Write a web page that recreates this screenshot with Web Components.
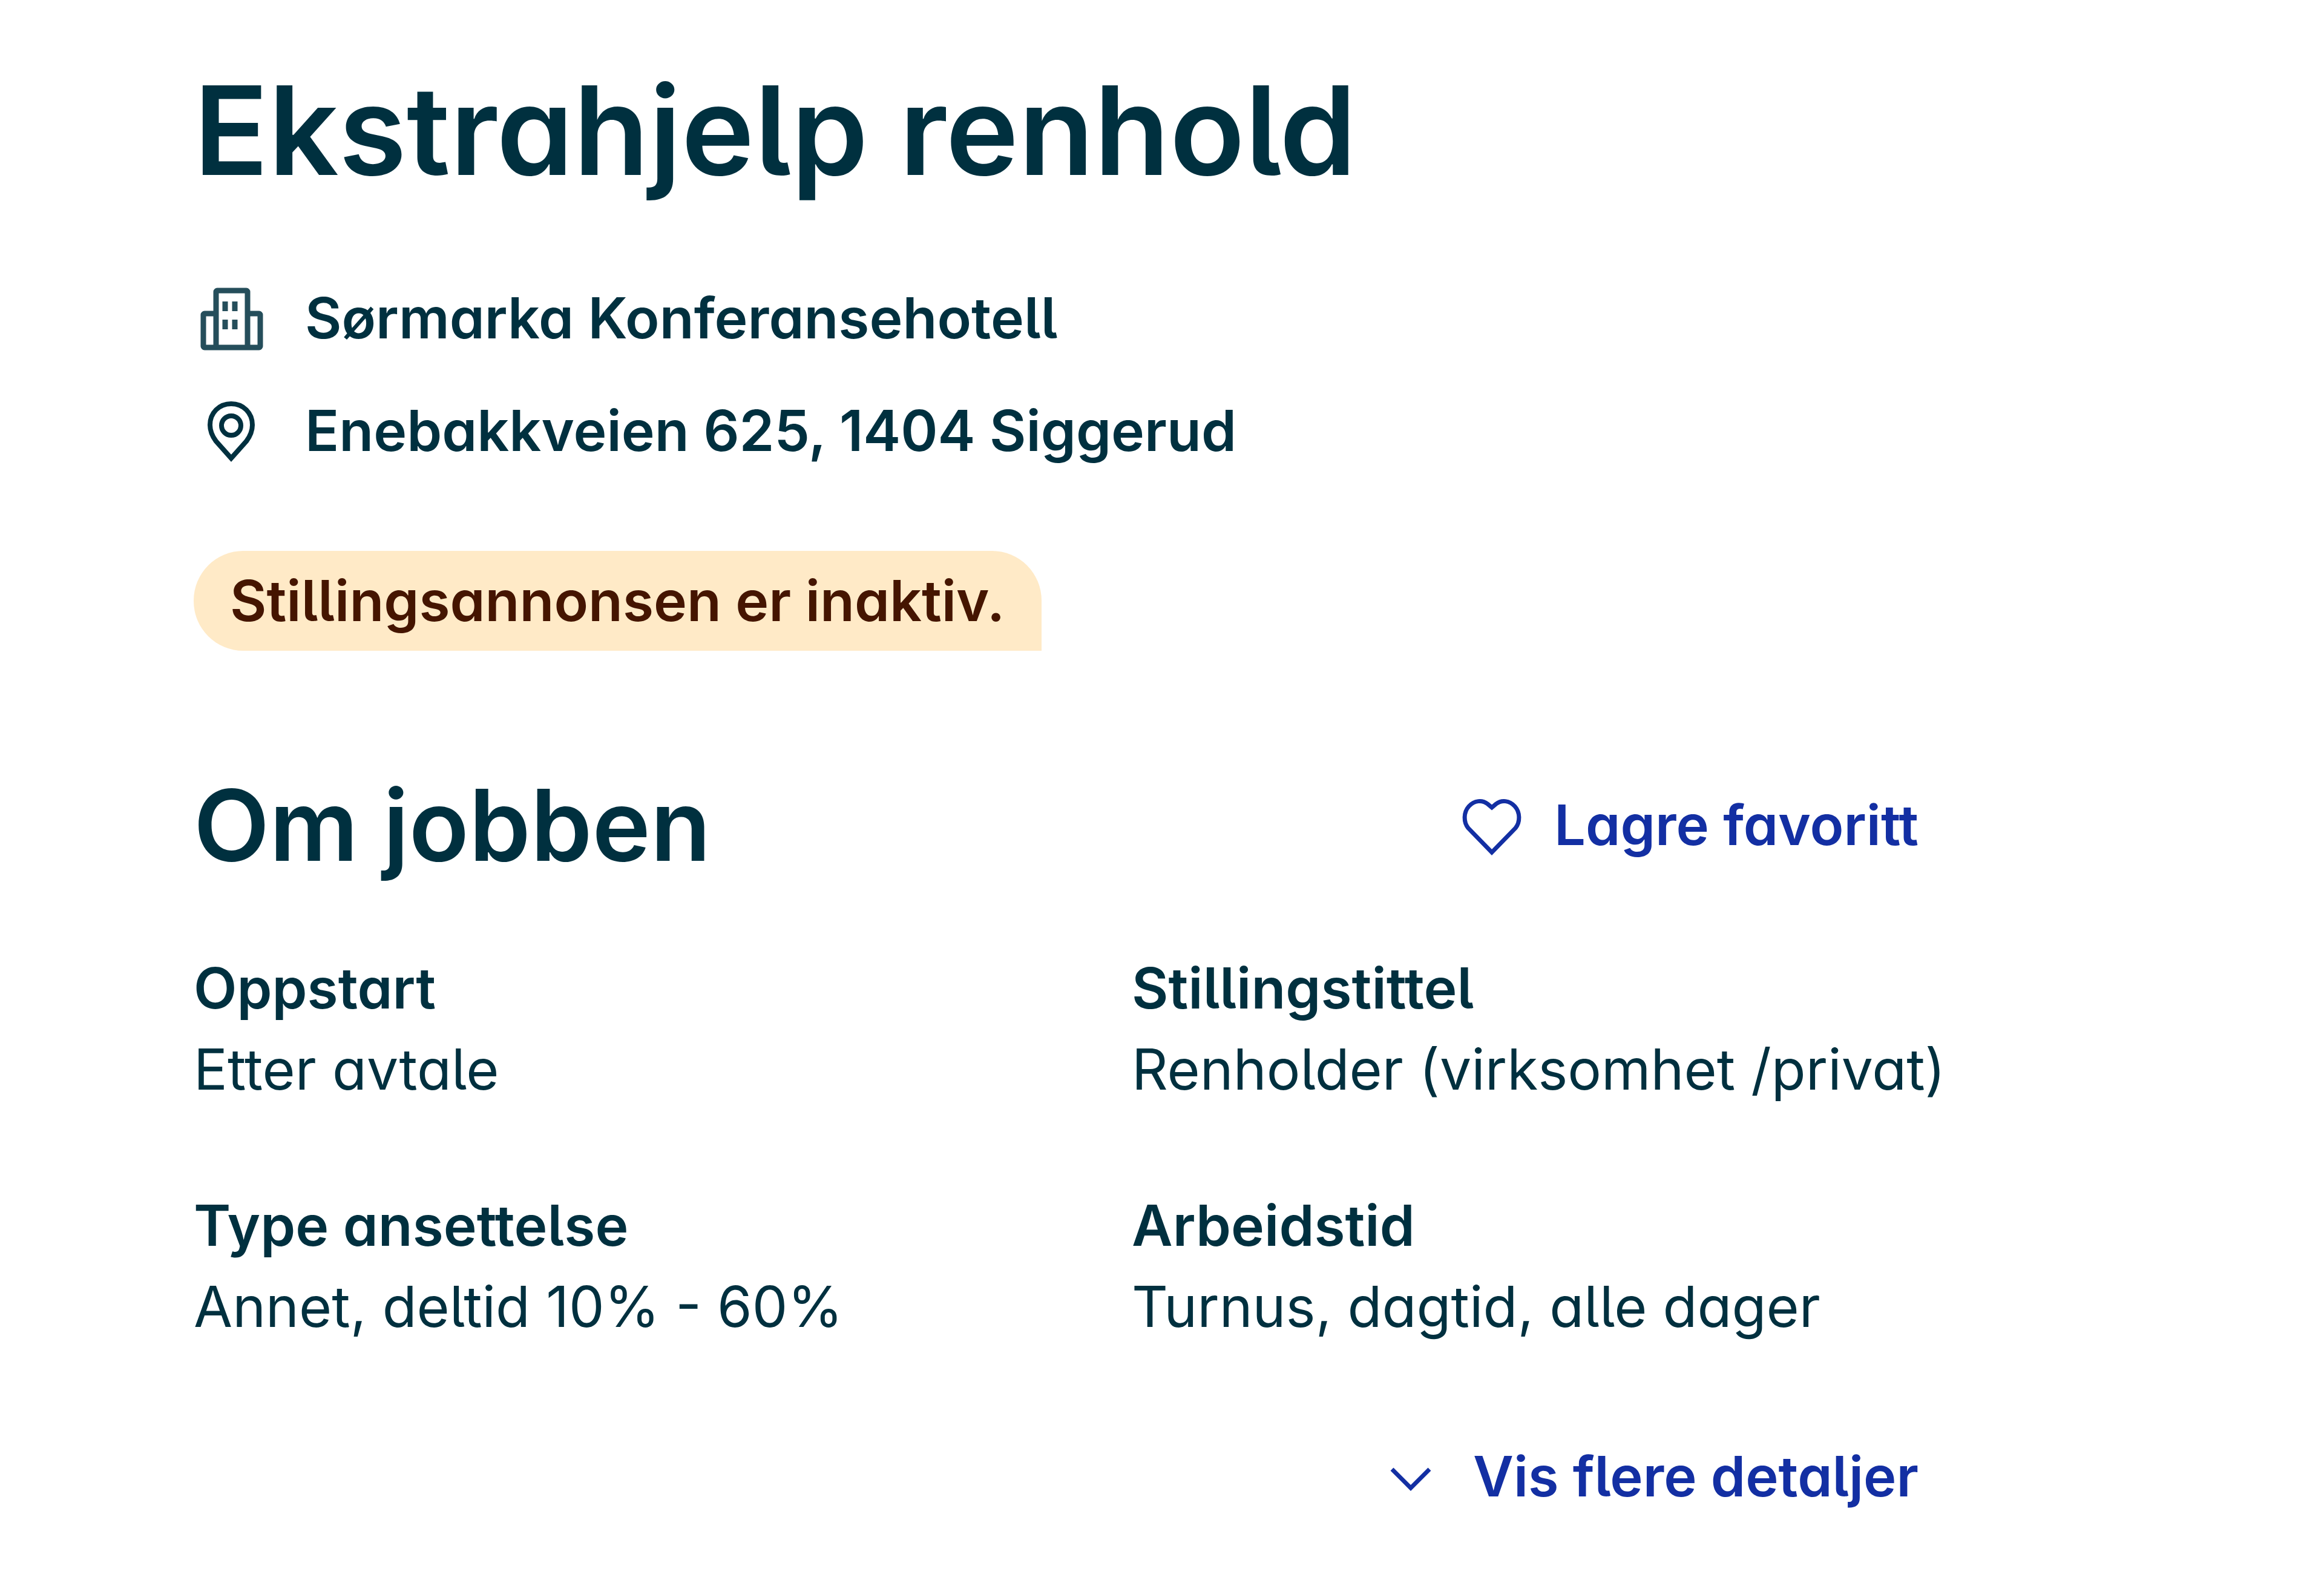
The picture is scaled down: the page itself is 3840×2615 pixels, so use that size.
<!DOCTYPE html>
<html lang="nb">
<head>
<meta charset="utf-8">
<meta name="viewport" content="width=device-width, initial-scale=1">
<title>Ekstrahjelp renhold</title>
<style>
    body {
        margin: 0;
        background: #fff;
        color: #00303f;
        font-family: Inter, "Open Sans", sans-serif;
        font-size: 93px;
        line-height: 134px;
        font-feature-settings: "cv11", "cv05";
    }
</style>
</head>
<body>
<job-ad>
    <span slot="title">Ekstrahjelp renhold</span>
    <job-fact slot="facts" icon="building">Sørmarka Konferansehotell</job-fact>
    <job-fact slot="facts" icon="pin">Enebakkveien 625, 1404 Siggerud</job-fact>
    <status-tag slot="status">Stillingsannonsen er inaktiv.</status-tag>
    <job-about heading="Om jobben">
        <text-button slot="action" icon="heart">Lagre favoritt</text-button>
        <job-detail label="Oppstart">Etter avtale</job-detail>
        <job-detail label="Stillingstittel">Renholder (virksomhet /privat)</job-detail>
        <job-detail label="Type ansettelse">Annet, deltid 10% - 60%</job-detail>
        <job-detail label="Arbeidstid">Turnus, dagtid, alle dager</job-detail>
        <text-button slot="more" icon="chevron">Vis flere detaljer</text-button>
    </job-about>
</job-ad>

<script>
const icons = {
    building: `
        <g stroke-width="9" opacity="0.85">
            <path d="M38 55H18a2 2 0 0 0-2 2V109a2 2 0 0 0 2 2H108a2 2 0 0 0 2-2V57a2 2 0 0 0-2-2H89"/>
            <path d="M37 111V19a2 2 0 0 1 2-2H87a2 2 0 0 1 2 2V111"/>
            <path d="M52 35v16M68 35v16M52 65v16M68 65v16"/>
        </g>`,
    pin: `
        <path stroke-width="8" d="M62 108L37 80C31 72 27 64 27 53C27 33 42 18 62 18S97 33 97 53C97 64 93 72 87 80Z"/>
        <circle stroke-width="8" cx="62" cy="54" r="16"/>`,
    heart: `
        <path stroke-width="7" d="M65 107L26 67C18 57 18 41 27 31C36 21 49 20 58 27L65 33L72 27C81 20 94 21 103 31C112 41 112 57 104 67Z"/>`,
    chevron: `
        <path stroke-width="7" d="M34 50L65 81L96 50"/>`
};

class AdIcon extends HTMLElement {
    connectedCallback() {
        this.attachShadow({ mode: "open" }).innerHTML = `
            <style>
                :host {
                    display: block;
                    flex: none;
                    width: 124px;
                    height: 124px;
                }

                svg {
                    display: block;
                }
            </style>
            <svg width="124" height="124" viewBox="0 0 124 124" fill="none" stroke="currentColor" aria-hidden="true">
                ${icons[this.getAttribute("name")]}
            </svg>
        `;
    }
}

class JobFact extends HTMLElement {
    connectedCallback() {
        this.attachShadow({ mode: "open" }).innerHTML = `
            <style>
                :host {
                    display: flex;
                    align-items: center;
                    gap: 60px;
                    height: 130px;
                    font-weight: 600;
                }
            </style>
            <ad-icon name="${this.getAttribute("icon")}"></ad-icon>
            <span><slot></slot></span>
        `;
    }
}

class StatusTag extends HTMLElement {
    connectedCallback() {
        this.attachShadow({ mode: "open" }).innerHTML = `
            <style>
                :host {
                    display: inline-block;
                    padding: 15px 60px 16px;
                    border-radius: 82px 82px 0 82px;
                    background: #ffeac7;
                    color: #451500;
                    font-weight: 600;
                }
            </style>
            <slot></slot>
        `;
    }
}

class TextButton extends HTMLElement {
    connectedCallback() {
        this.attachShadow({ mode: "open" }).innerHTML = `
            <style>
                :host {
                    display: block;
                }

                button {
                    display: flex;
                    align-items: center;
                    gap: 44px;
                    height: 160px;
                    margin: 0;
                    padding: 0 70px;
                    border: 0;
                    background: none;
                    color: #132fa3;
                    font: inherit;
                    font-size: 92px;
                    font-weight: 600;
                    font-feature-settings: inherit;
                    cursor: pointer;
                }
            </style>
            <button type="button">
                <ad-icon name="${this.getAttribute("icon")}"></ad-icon>
                <span><slot></slot></span>
            </button>
        `;
    }
}

class JobDetail extends HTMLElement {
    connectedCallback() {
        this.attachShadow({ mode: "open" }).innerHTML = `
            <style>
                :host {
                    display: block;
                    white-space: nowrap;
                }

                dl, dd {
                    margin: 0;
                }

                dt {
                    font-weight: 600;
                }
            </style>
            <dl>
                <dt>${this.getAttribute("label")}</dt>
                <dd><slot></slot></dd>
            </dl>
        `;
    }
}

class JobAbout extends HTMLElement {
    connectedCallback() {
        this.attachShadow({ mode: "open" }).innerHTML = `
            <style>
                :host {
                    display: block;
                }

                header {
                    display: flex;
                    align-items: center;
                    justify-content: space-between;
                    margin-bottom: 122px;
                }

                h2 {
                    margin: 0;
                    font-size: 163px;
                    font-weight: 600;
                    line-height: 160px;
                }

                .details {
                    display: grid;
                    grid-template-columns: 1fr 1fr;
                    gap: 124px 180px;
                }

                footer {
                    display: flex;
                    justify-content: flex-end;
                    margin-top: 134px;
                }
            </style>
            <header>
                <h2>${this.getAttribute("heading")}</h2>
                <slot name="action"></slot>
            </header>
            <div class="details">
                <slot></slot>
            </div>
            <footer>
                <slot name="more"></slot>
            </footer>
        `;
    }
}

class JobAd extends HTMLElement {
    connectedCallback() {
        this.attachShadow({ mode: "open" }).innerHTML = `
            <style>
                :host {
                    display: block;
                    padding: 90px 600px 90px 320px;
                }

                h1 {
                    margin: 0 0 120px;
                    font-size: 204px;
                    font-weight: 600;
                    line-height: 250px;
                }

                .facts {
                    display: flex;
                    flex-direction: column;
                    gap: 56px;
                    margin-bottom: 134px;
                }

                .status {
                    display: flex;
                    margin-bottom: 208px;
                }
            </style>
            <article>
                <h1><slot name="title"></slot></h1>
                <div class="facts"><slot name="facts"></slot></div>
                <div class="status"><slot name="status"></slot></div>
                <slot></slot>
            </article>
        `;
    }
}

customElements.define("ad-icon", AdIcon);
customElements.define("job-fact", JobFact);
customElements.define("status-tag", StatusTag);
customElements.define("text-button", TextButton);
customElements.define("job-detail", JobDetail);
customElements.define("job-about", JobAbout);
customElements.define("job-ad", JobAd);
</script>
</body>
</html>
